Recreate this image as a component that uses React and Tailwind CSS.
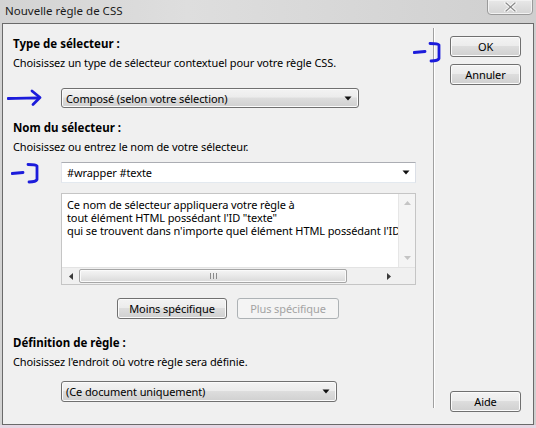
import React from "react";

// Small black dropdown caret used by the combo boxes
function Caret({ className = "" }) {
  return (
    <svg width="8" height="5" viewBox="0 0 8 5" className={className}>
      <path d="M0.5 0.5 H7.5 L4 4.5 Z" fill="#111" />
    </svg>
  );
}

function Button({ children, disabled = false, className = "" }) {
  return (
    <div
      className={
        "flex h-[21px] items-center justify-center rounded-[3px] border leading-none " +
        (disabled
          ? "border-[#adb2b5] bg-[#f4f4f4] text-[#a3a3a3] "
          : "border-[#707070] bg-[linear-gradient(#f3f3f3,#ececec_45%,#dddddd_50%,#d0d0d0)] text-black shadow-[inset_0_0_0_1px_#fbfbfb] ") +
        className
      }
    >
      {children}
    </div>
  );
}

function Heading({ children, className = "" }) {
  return <div className={"text-[11.5px] font-bold leading-[19px] tracking-normal " + className}>{children}</div>;
}

function Hint({ children }) {
  return <div className="leading-[19px]">{children}</div>;
}

// Hand-drawn blue arrow pointing right
function ArrowMark() {
  return (
    <svg width="36" height="18" viewBox="0 0 36 18" className="-ml-[6px]">
      <path d="M1 9.5 C10 9 20 9.2 31 9" stroke="#1c1cdb" strokeWidth="2.8" fill="none" strokeLinecap="round" />
      <path d="M25 2 L33 8.5 L26 15.5" stroke="#1c1cdb" strokeWidth="2.8" fill="none" strokeLinecap="round" strokeLinejoin="round" />
    </svg>
  );
}

// Hand-drawn blue dash with a closing bracket
function BracketMark({ className = "" }) {
  return (
    <svg width="30" height="22" viewBox="0 0 30 22" className={className}>
      <path d="M1 11.5 L12 10.5" stroke="#1c1cdb" strokeWidth="2.8" fill="none" strokeLinecap="round" />
      <path d="M17 2.5 C21 2.5 25 2.5 26 4 L26 17.5 C25 19.5 21 20 18 20" stroke="#1c1cdb" strokeWidth="2.8" fill="none" strokeLinecap="round" strokeLinejoin="round" />
    </svg>
  );
}

export default function App() {
  return (
    <div className="relative flex h-[428px] w-[536px] flex-col overflow-hidden bg-[linear-gradient(90deg,#d3d3d3,#dedede_35%,#d6d6d6_70%,#cfcfcf)] font-['Segoe_UI','Noto_Sans',sans-serif] text-[11px] tracking-[-0.1px] text-black">
      {/* title bar */}
      <div className="flex h-[23px] shrink-0 items-start">
        <div className="pl-[5px] pt-[1px] text-[11.5px] leading-[19px] tracking-normal text-[#1a1a1a]">Nouvelle règle de CSS</div>
        <div className="ml-auto mr-[3px] -mt-[1px] flex h-[16px] w-[46px] items-center justify-center rounded-b-[4px] border border-[#9a9a9a] bg-[linear-gradient(#e8e8e8,#d4d4d4)] shadow-[inset_0_0_0_1px_#f2f2f2]">
          <svg width="13" height="10" viewBox="0 0 13 10">
            <path d="M2 1 L11 9 M11 1 L2 9" stroke="#f7f7f7" strokeWidth="3.4" strokeLinecap="round" />
            <path d="M2 1 L11 9 M11 1 L2 9" stroke="#8a8a8a" strokeWidth="1.2" strokeLinecap="round" />
          </svg>
        </div>
      </div>

      {/* dialog body */}
      <div className="mx-[2px] flex h-[402px] shrink-0 border border-[#6a6a6a] bg-[#f0f0f0]">
        {/* left column */}
        <div className="w-[430px] shrink-0 pl-[10px] pt-[10px]">
          <Heading>Type de sélecteur :</Heading>
          <Hint>Choisissez un type de sélecteur contextuel pour votre règle CSS.</Hint>

          <div className="mt-[16px] flex h-[20px] items-center">
            <div className="flex w-[48px] items-center">
              <ArrowMark />
            </div>
            <div className="flex h-[20px] w-[298px] items-center rounded-[3px] border border-[#707070] bg-[linear-gradient(#f3f3f3,#ececec_45%,#dddddd_50%,#d0d0d0)] pl-[4px] pr-[6px] shadow-[inset_0_0_0_1px_#fbfbfb]">
              <span className="leading-none">Composé (selon votre sélection)</span>
              <Caret className="ml-auto" />
            </div>
          </div>

          <Heading className="mt-[10px]">Nom du sélecteur :</Heading>
          <Hint>Choisissez ou entrez le nom de votre sélecteur.</Hint>

          <div className="mt-[6px] flex h-[21px] items-center">
            <div className="flex w-[48px] items-center">
              <BracketMark className="-ml-[2px]" />
            </div>
            <div className="flex h-[21px] w-[355px] items-center border border-[#abadb3] border-b-[#e3e9ef] border-l-[#e2e3ea] border-r-[#dbdfe6] bg-white pl-[5px] pr-[5px]">
              <span className="leading-none">#wrapper #texte</span>
              <Caret className="ml-auto" />
            </div>
          </div>

          {/* description box with scrollbars */}
          <div className="ml-[48px] mt-[10px] flex h-[92px] w-[355px] flex-col border border-[#c5c5c5] bg-white">
            <div className="flex min-h-0 flex-1">
              <div className="min-w-0 flex-1 overflow-hidden whitespace-nowrap pl-[5px] pt-[4px] leading-[13px]">
                <div>Ce nom de sélecteur appliquera votre règle à</div>
                <div>tout élément HTML possédant l'ID "texte"</div>
                <div>qui se trouvent dans n'importe quel élément HTML possédant l'ID "wrapper"</div>
              </div>
              <div className="flex w-[17px] shrink-0 flex-col items-center justify-between border-l border-[#e6e6e6] bg-[#f4f4f4] py-[7px]">
                <svg width="7" height="4" viewBox="0 0 7 4">
                  <path d="M0 4 L3.5 0 L7 4 Z" fill="#c4c4c4" />
                </svg>
                <svg width="7" height="4" viewBox="0 0 7 4">
                  <path d="M0 0 L7 0 L3.5 4 Z" fill="#c4c4c4" />
                </svg>
              </div>
            </div>
            <div className="flex h-[17px] shrink-0 border-t border-[#e3e3e3] bg-[#f0f0f0]">
              <div className="flex w-[17px] shrink-0 items-center justify-center">
                <svg width="4" height="7" viewBox="0 0 4 7">
                  <path d="M4 0 L0 3.5 L4 7 Z" fill="#3a3a3a" />
                </svg>
              </div>
              <div className="my-[1px] flex w-[268px] items-center justify-center rounded-[2px] border border-[#a6a6a6] bg-[linear-gradient(#f5f5f5,#e8e8e8_50%,#d9d9d9)] shadow-[inset_0_0_0_1px_#fafafa]">
                <svg width="7" height="6" viewBox="0 0 7 6">
                  <path d="M0.5 0 V6 M3.5 0 V6 M6.5 0 V6" stroke="#8a8a8a" strokeWidth="1" />
                </svg>
              </div>
              <div className="flex flex-1 items-center justify-end pr-[7px]">
                <svg width="4" height="7" viewBox="0 0 4 7">
                  <path d="M0 0 L4 3.5 L0 7 Z" fill="#3a3a3a" />
                </svg>
              </div>
              <div className="w-[17px] shrink-0 bg-[#f0f0f0]" />
            </div>
          </div>

          <div className="mt-[13px] flex gap-[10px] pl-[104px]">
            <Button className="w-[110px]">Moins spécifique</Button>
            <Button disabled className="w-[102px]">Plus spécifique</Button>
          </div>

          <Heading className="mt-[14px]">Définition de règle :</Heading>
          <Hint>Choisissez l'endroit où votre règle sera définie.</Hint>

          <div className="ml-[48px] mt-[10px] flex h-[21px] w-[276px] items-center rounded-[3px] border border-[#707070] bg-[linear-gradient(#f3f3f3,#ececec_45%,#dddddd_50%,#d0d0d0)] pl-[4px] pr-[6px] shadow-[inset_0_0_0_1px_#fbfbfb]">
            <span className="leading-none">(Ce document uniquement)</span>
            <Caret className="ml-auto" />
          </div>
        </div>

        {/* vertical separator */}
        <div className="mt-[4px] h-[380px] w-[2px] shrink-0 border-l border-r border-l-[#a0a0a0] border-r-white" />

        {/* right column */}
        <div className="relative flex flex-1 flex-col pb-[12px] pl-[15px] pt-[12px]">
          <Button className="w-[71px]">OK</Button>
          <Button className="mt-[7px] w-[71px]">Annuler</Button>
          <Button className="mt-auto w-[71px]">Aide</Button>
        </div>
      </div>

      <div className="flex-1 bg-[#e6d7e4]" />

      {/* annotation mark beside OK */}
      <BracketMark className="absolute left-[413px] top-[41px]" />
    </div>
  );
}
